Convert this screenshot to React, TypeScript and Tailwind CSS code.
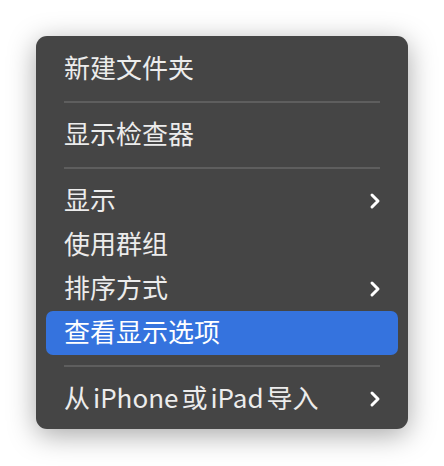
import React from "react";

type Item = { label: React.ReactNode; key: string; submenu?: boolean; active?: boolean };

const groups: Item[][] = [
  [{ key: "new", label: "新建文件夹" }],
  [{ key: "inspector", label: "显示检查器" }],
  [
    { key: "show", label: "显示", submenu: true },
    { key: "groups", label: "使用群组" },
    { key: "sort", label: "排序方式", submenu: true },
    { key: "view", label: "查看显示选项", active: true },
  ],
  [
    {
      key: "import",
      label: (
        <>
          从<span className="inline-block mx-[3px]">iPhone</span>或<span className="inline-block mx-[3px]">iPad</span>导入
        </>
      ),
      submenu: true,
    },
  ],
];

function Chevron() {
  return (
    <svg width="14" height="20" viewBox="0 0 14 20" fill="none">
      <path
        d="M4 4 L10 10 L4 16"
        stroke="#ffffff"
        strokeWidth="3"
        strokeLinecap="round"
        strokeLinejoin="round"
      />
    </svg>
  );
}

function MenuRow({ item }: { item: Item }) {
  return (
    <div
      className={
        item.active
          ? "mx-[10px] h-[44px] flex items-center justify-between pl-[18px] pr-[16px] rounded-[7px] bg-[#3573de] text-white"
          : "mx-[10px] h-[44px] flex items-center justify-between pl-[18px] pr-[16px] text-[#ececec]"
      }
    >
      <span className="pb-[4px]">{item.label}</span>
      {item.submenu && <Chevron />}
    </div>
  );
}

export default function App() {
  return (
    <div className="w-[444px] h-[466px] bg-white pt-[36px] pl-[36px]">
      <div
        className="w-[372px] h-[393px] rounded-[11px] bg-[#454545] pt-[11px] pb-[8px] shadow-[0_6px_28px_rgba(0,0,0,0.35)] text-[26px] leading-none"
        style={{ fontFamily: '"Noto Sans CJK SC", "Noto Sans", sans-serif' }}
      >
        {groups.map((group, gi) => (
          <div key={gi}>
            {gi > 0 && (
              <div className="h-[22px] flex items-center px-[28px]">
                <div className="w-full h-[2px] bg-[#5e5e5e]" />
              </div>
            )}
            {group.map((item) => (
              <MenuRow key={item.key} item={item} />
            ))}
          </div>
        ))}
      </div>
    </div>
  );
}
